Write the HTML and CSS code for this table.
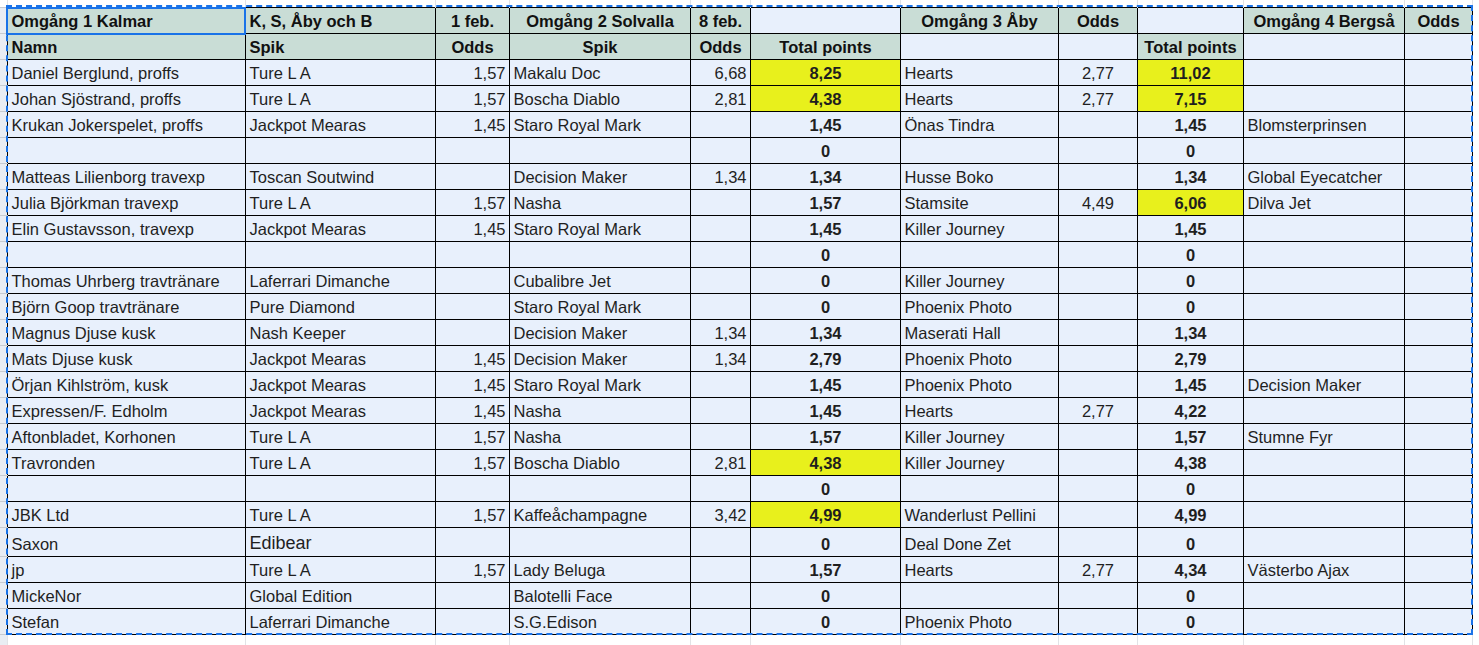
FILE: index.html
```html
<!DOCTYPE html>
<html lang="sv">
<head>
<meta charset="utf-8">
<title>Omgångar</title>
<link rel="stylesheet" href="styles.css">
</head>
<body>
<div class="sheet">
<table class="grid">
<colgroup>
<col class="w-rh"><col class="w-name"><col class="w-spik1"><col class="w-odds1"><col class="w-spik2"><col class="w-odds2"><col class="w-tot2"><col class="w-spik3"><col class="w-odds3"><col class="w-tot3"><col class="w-spik4"><col class="w-odds4">
</colgroup>
<tr class="edge-top"><td class="rh-top"></td><td></td><td></td><td></td><td></td><td></td><td></td><td></td><td></td><td></td><td></td><td></td></tr>
<tr class="row"><td class="rh"></td><td class="h l b sel">Omgång 1 Kalmar</td><td class="h l b">K, S, Åby och B</td><td class="h c b">1 feb.</td><td class="h c b">Omgång 2 Solvalla</td><td class="h c b">8 feb.</td><td></td><td class="h c b">Omgång 3 Åby</td><td class="h c b">Odds</td><td></td><td class="h c b">Omgång 4 Bergså</td><td class="h c b">Odds</td></tr>
<tr class="row"><td class="rh"></td><td class="h l b">Namn</td><td class="h l b">Spik</td><td class="h c b">Odds</td><td class="h c b">Spik</td><td class="h c b">Odds</td><td class="h c b">Total points</td><td></td><td></td><td class="h c b">Total points</td><td></td><td></td></tr>
<tr class="row"><td class="rh"></td><td class="l">Daniel Berglund, proffs</td><td class="l">Ture L A</td><td class="r">1,57</td><td class="l">Makalu Doc</td><td class="r">6,68</td><td class="c b y">8,25</td><td class="l">Hearts</td><td class="c">2,77</td><td class="c b y">11,02</td><td></td><td></td></tr>
<tr class="row"><td class="rh"></td><td class="l">Johan Sjöstrand, proffs</td><td class="l">Ture L A</td><td class="r">1,57</td><td class="l">Boscha Diablo</td><td class="r">2,81</td><td class="c b y">4,38</td><td class="l">Hearts</td><td class="c">2,77</td><td class="c b y">7,15</td><td></td><td></td></tr>
<tr class="row"><td class="rh"></td><td class="l">Krukan Jokerspelet, proffs</td><td class="l">Jackpot Mearas</td><td class="r">1,45</td><td class="l">Staro Royal Mark</td><td></td><td class="c b">1,45</td><td class="l">Önas Tindra</td><td></td><td class="c b">1,45</td><td class="l">Blomsterprinsen</td><td></td></tr>
<tr class="row"><td class="rh"></td><td></td><td></td><td></td><td></td><td></td><td class="c b">0</td><td></td><td></td><td class="c b">0</td><td></td><td></td></tr>
<tr class="row"><td class="rh"></td><td class="l">Matteas Lilienborg travexp</td><td class="l">Toscan Soutwind</td><td></td><td class="l">Decision Maker</td><td class="r">1,34</td><td class="c b">1,34</td><td class="l">Husse Boko</td><td></td><td class="c b">1,34</td><td class="l">Global Eyecatcher</td><td></td></tr>
<tr class="row"><td class="rh"></td><td class="l">Julia Björkman travexp</td><td class="l">Ture L A</td><td class="r">1,57</td><td class="l">Nasha</td><td></td><td class="c b">1,57</td><td class="l">Stamsite</td><td class="c">4,49</td><td class="c b y">6,06</td><td class="l">Dilva Jet</td><td></td></tr>
<tr class="row"><td class="rh"></td><td class="l">Elin Gustavsson, travexp</td><td class="l">Jackpot Mearas</td><td class="r">1,45</td><td class="l">Staro Royal Mark</td><td></td><td class="c b">1,45</td><td class="l">Killer Journey</td><td></td><td class="c b">1,45</td><td></td><td></td></tr>
<tr class="row"><td class="rh"></td><td></td><td></td><td></td><td></td><td></td><td class="c b">0</td><td></td><td></td><td class="c b">0</td><td></td><td></td></tr>
<tr class="row"><td class="rh"></td><td class="l">Thomas Uhrberg travtränare</td><td class="l">Laferrari Dimanche</td><td></td><td class="l">Cubalibre Jet</td><td></td><td class="c b">0</td><td class="l">Killer Journey</td><td></td><td class="c b">0</td><td></td><td></td></tr>
<tr class="row"><td class="rh"></td><td class="l">Björn Goop travtränare</td><td class="l">Pure Diamond</td><td></td><td class="l">Staro Royal Mark</td><td></td><td class="c b">0</td><td class="l">Phoenix Photo</td><td></td><td class="c b">0</td><td></td><td></td></tr>
<tr class="row"><td class="rh"></td><td class="l">Magnus Djuse kusk</td><td class="l">Nash Keeper</td><td></td><td class="l">Decision Maker</td><td class="r">1,34</td><td class="c b">1,34</td><td class="l">Maserati Hall</td><td></td><td class="c b">1,34</td><td></td><td></td></tr>
<tr class="row"><td class="rh"></td><td class="l">Mats Djuse kusk</td><td class="l">Jackpot Mearas</td><td class="r">1,45</td><td class="l">Decision Maker</td><td class="r">1,34</td><td class="c b">2,79</td><td class="l">Phoenix Photo</td><td></td><td class="c b">2,79</td><td></td><td></td></tr>
<tr class="row"><td class="rh"></td><td class="l">Örjan Kihlström, kusk</td><td class="l">Jackpot Mearas</td><td class="r">1,45</td><td class="l">Staro Royal Mark</td><td></td><td class="c b">1,45</td><td class="l">Phoenix Photo</td><td></td><td class="c b">1,45</td><td class="l">Decision Maker</td><td></td></tr>
<tr class="row"><td class="rh"></td><td class="l">Expressen/F. Edholm</td><td class="l">Jackpot Mearas</td><td class="r">1,45</td><td class="l">Nasha</td><td></td><td class="c b">1,45</td><td class="l">Hearts</td><td class="c">2,77</td><td class="c b">4,22</td><td></td><td></td></tr>
<tr class="row"><td class="rh"></td><td class="l">Aftonbladet, Korhonen</td><td class="l">Ture L A</td><td class="r">1,57</td><td class="l">Nasha</td><td></td><td class="c b">1,57</td><td class="l">Killer Journey</td><td></td><td class="c b">1,57</td><td class="l">Stumne Fyr</td><td></td></tr>
<tr class="row"><td class="rh"></td><td class="l">Travronden</td><td class="l">Ture L A</td><td class="r">1,57</td><td class="l">Boscha Diablo</td><td class="r">2,81</td><td class="c b y">4,38</td><td class="l">Killer Journey</td><td></td><td class="c b">4,38</td><td></td><td></td></tr>
<tr class="row"><td class="rh"></td><td></td><td></td><td></td><td></td><td></td><td class="c b">0</td><td></td><td></td><td class="c b">0</td><td></td><td></td></tr>
<tr class="row"><td class="rh"></td><td class="l">JBK Ltd</td><td class="l">Ture L A</td><td class="r">1,57</td><td class="l">Kaffeåchampagne</td><td class="r">3,42</td><td class="c b y">4,99</td><td class="l">Wanderlust Pellini</td><td></td><td class="c b">4,99</td><td></td><td></td></tr>
<tr class="row tall"><td class="rh"></td><td class="l">Saxon</td><td class="l big">Edibear</td><td></td><td></td><td></td><td class="c b">0</td><td class="l">Deal Done Zet</td><td></td><td class="c b">0</td><td></td><td></td></tr>
<tr class="row"><td class="rh"></td><td class="l">jp</td><td class="l">Ture L A</td><td class="r">1,57</td><td class="l">Lady Beluga</td><td></td><td class="c b">1,57</td><td class="l">Hearts</td><td class="c">2,77</td><td class="c b">4,34</td><td class="l">Västerbo Ajax</td><td></td></tr>
<tr class="row"><td class="rh"></td><td class="l">MickeNor</td><td class="l">Global Edition</td><td></td><td class="l">Balotelli Face</td><td></td><td class="c b">0</td><td></td><td></td><td class="c b">0</td><td></td><td></td></tr>
<tr class="row"><td class="rh"></td><td class="l">Stefan</td><td class="l">Laferrari Dimanche</td><td></td><td class="l">S.G.Edison</td><td></td><td class="c b">0</td><td class="l">Phoenix Photo</td><td></td><td class="c b">0</td><td></td><td></td></tr>
<tr class="edge-bottom"><td class="rh-bottom"></td><td></td><td></td><td></td><td></td><td></td><td></td><td></td><td></td><td></td><td></td><td></td></tr>
</table>
<div class="marquee"></div>
</div>
</body>
</html>
```

FILE: styles.css
```css
html, body {
  margin: 0;
  padding: 0;
  background: #ffffff;
}

body {
  font-family: "Liberation Sans", Arial, sans-serif;
  font-size: 16.5px;
  color: #1f1f1f;
  overflow: hidden;
}

.sheet {
  position: relative;
  width: 1479px;
  height: 645px;
}

.grid {
  border-collapse: collapse;
  table-layout: fixed;
  width: 1472px;
}

.w-rh { width: 7px; }
.w-name { width: 238px; }
.w-spik1 { width: 190px; }
.w-odds1 { width: 74px; }
.w-spik2 { width: 181px; }
.w-odds2 { width: 60px; }
.w-tot2 { width: 150px; }
.w-spik3 { width: 158px; }
.w-odds3 { width: 79px; }
.w-tot3 { width: 106px; }
.w-spik4 { width: 161px; }
.w-odds4 { width: 68px; }

.grid td {
  padding: 0 3px 2px 4px;
  white-space: nowrap;
  overflow: hidden;
  vertical-align: bottom;
  line-height: normal;
}

.row td {
  height: 26px;
  box-sizing: border-box;
  border: 1px solid #000;
  background: #e8f0fc;
}

.row.tall td {
  height: 29px;
}

.edge-top td {
  height: 7px;
  padding: 0;
  border-left: 1px solid #e1e3e6;
  border-right: 1px solid #e1e3e6;
  background: #fff;
}

.edge-bottom td {
  height: 11px;
  padding: 0;
  border-left: 1px solid #e1e3e6;
  border-right: 1px solid #e1e3e6;
  background: #fff;
}

.grid td.rh,
.grid td.rh-bottom {
  padding: 0;
  background: #e9edf3;
  border-left: 0;
  border-top: 1px solid #c7cbd1;
  border-bottom: 1px solid #c7cbd1;
}

.grid td.rh-top {
  border-left: 0;
  background: #fff;
}

.h {
  background: #c9ddd6 !important;
  color: #111;
}

.y {
  background: #e8f01c !important;
}

.b { font-weight: bold; }
.l { text-align: left; }
.r { text-align: right; }
.c { text-align: center; }

.big {
  font-size: 18px;
}

.sel {
  outline: 2px solid #1a73e8;
  outline-offset: -1px;
}

.marquee {
  position: absolute;
  left: 6px;
  top: 5px;
  width: 1467px;
  height: 630px;
  box-sizing: border-box;
  border: 2px dashed #1a73e8;
  pointer-events: none;
}
```
